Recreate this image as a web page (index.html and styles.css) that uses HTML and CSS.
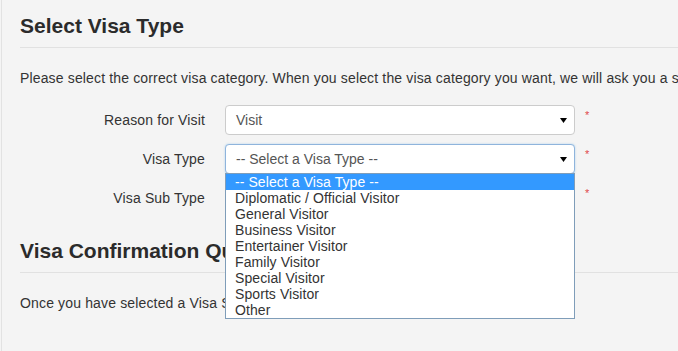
FILE: index.html
```html
<!DOCTYPE html>
<html>
<head>
<meta charset="utf-8">
<link rel="stylesheet" href="styles.css">
</head>
<body>
<div class="page">
  <h2 class="section-title">Select Visa Type</h2>
  <p class="intro">Please select the correct visa category. When you select the visa category you want, we will ask you a series of questions to confirm the right visa.</p>
  <div class="form">
    <div class="row">
      <label class="label">Reason for Visit</label>
      <div class="select"><span>Visit</span><svg class="arrow" width="7" height="5" viewBox="0 0 7 5"><polygon points="0,0 7,0 3.5,5" fill="#000"/></svg></div>
      <span class="req">*</span>
    </div>
    <div class="row">
      <label class="label">Visa Type</label>
      <div class="select focus"><span>-- Select a Visa Type --</span><svg class="arrow" width="7" height="5" viewBox="0 0 7 5"><polygon points="0,0 7,0 3.5,5" fill="#000"/></svg>
        <ul class="dropdown">
          <li class="sel">-- Select a Visa Type --</li>
          <li>Diplomatic / Official Visitor</li>
          <li>General Visitor</li>
          <li>Business Visitor</li>
          <li>Entertainer Visitor</li>
          <li>Family Visitor</li>
          <li>Special Visitor</li>
          <li>Sports Visitor</li>
          <li>Other</li>
        </ul>
      </div>
      <span class="req">*</span>
    </div>
    <div class="row">
      <label class="label">Visa Sub Type</label>
      <div class="select"><span>-- Select a Visa Sub Type --</span><svg class="arrow" width="7" height="5" viewBox="0 0 7 5"><polygon points="0,0 7,0 3.5,5" fill="#000"/></svg></div>
      <span class="req">*</span>
    </div>
  </div>
  <h2 class="section-title second">Visa Confirmation Questions</h2>
  <p class="intro">Once you have selected a Visa Sub Type, please answer the questions.</p>
</div>
</body>
</html>
```
FILE: styles.css
```css
html, body {
  margin: 0;
  padding: 0;
  background: #f4f4f4;
  overflow: hidden;
}
body {
  font-family: "Liberation Sans", Arial, sans-serif;
  font-size: 14px;
  color: #333;
  width: 678px;
  height: 351px;
}
.page {
  margin-left: 1px;
  border-left: 1px solid #e2e2e2;
  padding: 15px 0 0 18px;
  height: 336px;
}
.section-title {
  margin: 0;
  font-size: 21px;
  line-height: 22px;
  font-weight: bold;
  color: #2b2b2b;
  padding-bottom: 10px;
  border-bottom: 1px solid #e1e1e1;
}
.section-title.second {
  margin-top: 27px;
}
.intro {
  margin: 20px 0 0 0;
  line-height: 20px;
  white-space: nowrap;
  color: #333;
  letter-spacing: 0.15px;
}
.form {
  margin-top: 17px;
  display: flex;
  flex-direction: column;
  gap: 9px;
}
.row {
  display: flex;
  align-items: center;
  height: 30px;
}
.label {
  width: 185px;
  text-align: right;
  margin-right: 20px;
  color: #333;
  letter-spacing: 0.15px;
}
.select {
  position: relative;
  box-sizing: border-box;
  width: 350px;
  height: 30px;
  background: #fff;
  border: 1px solid #ccc;
  border-radius: 4px;
  display: flex;
  align-items: center;
  padding-left: 10px;
  color: #555;
}
.select.focus {
  border-color: #8fb4dc;
  box-shadow: 0 0 2px rgba(102, 175, 233, 0.5);
}
.arrow {
  position: absolute;
  right: 7px;
  top: 12px;
}
.req {
  color: #e0474b;
  font-size: 11px;
  margin-left: 10px;
  align-self: flex-start;
  margin-top: 4px;
}
.dropdown {
  position: absolute;
  left: -1px;
  top: 28px;
  width: 350px;
  box-sizing: border-box;
  margin: 0;
  padding: 0;
  list-style: none;
  background: #fff;
  border: 1px solid #7f9db9;
  z-index: 10;
}
.dropdown li {
  height: 16px;
  line-height: 16px;
  padding-left: 9px;
  color: #333;
  white-space: nowrap;
  letter-spacing: 0.08px;
}
.dropdown li.sel {
  background: #3399ff;
  color: #fff;
}
```
